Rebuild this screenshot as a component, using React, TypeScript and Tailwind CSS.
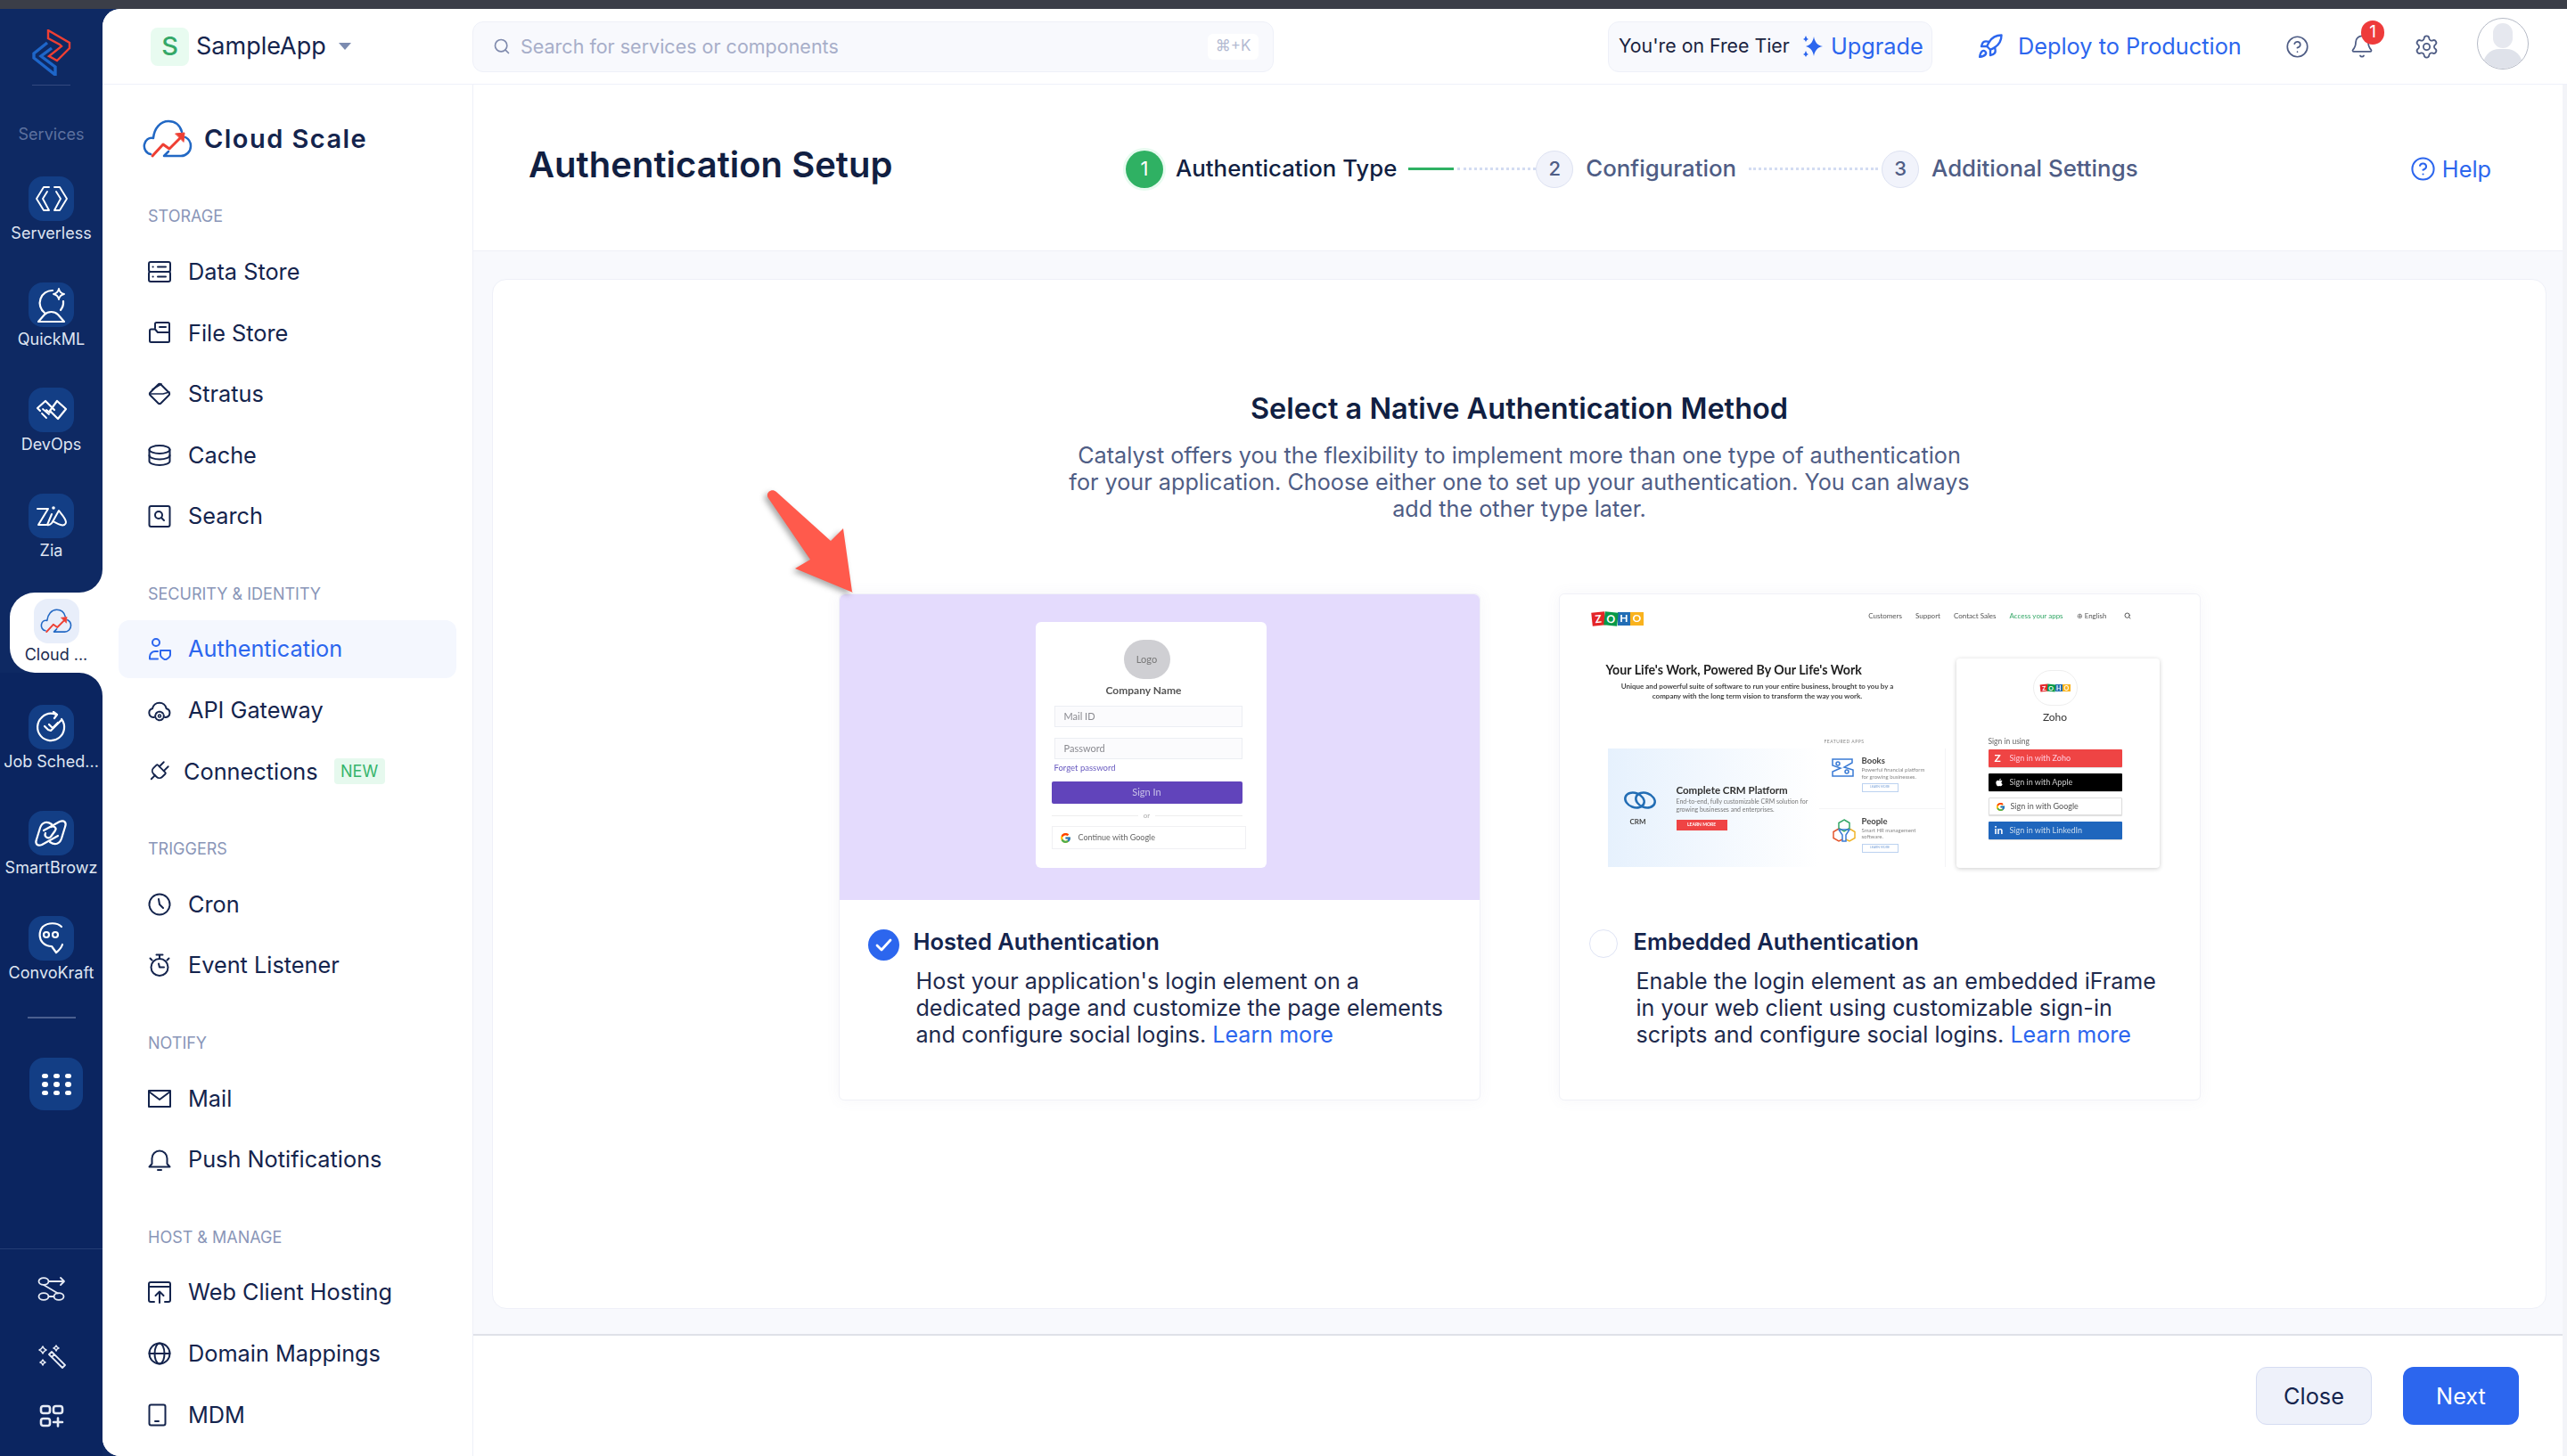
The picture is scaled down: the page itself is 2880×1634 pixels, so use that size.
import type { ReactNode } from "react";
import { Bell, CircleHelp, Plug, Rocket, Search, Settings } from "lucide-react";
import { FaApple } from "react-icons/fa";
import { FcGoogle } from "react-icons/fc";

function Line({ className, children, w = 26, h = 26, sw = 2 }: { className?: string; children: ReactNode; w?: number; h?: number; sw?: number }) {
  return (
    <svg width={w} height={h} viewBox={`0 0 ${w} ${h}`} fill="none" stroke="currentColor" strokeWidth={sw} strokeLinecap="round" strokeLinejoin="round" className={className}>
      {children}
    </svg>
  );
}

function CloudLogo({ w, h }: { w: number; h: number }) {
  return (
    <svg width={w} height={h} viewBox="0 0 56 44" fill="none" strokeLinecap="round" strokeLinejoin="round">
      <path d="M9 39C4 38 1 33 2 28c1-5 5-8 10-7C13 10 20 2 29 2c7 0 13 4 15 12" stroke="#2268c4" strokeWidth="2.5" />
      <path d="M48 20c4 2 6 6 6 10 0 6-5 11-11 11H24l5-5" stroke="#2268c4" strokeWidth="2.5" />
      <path d="M11 41l12-13 7 5 14-14" stroke="#ee3f33" strokeWidth="3" />
      <path d="M37 16l10-1-1 10z" fill="#ee3f33" stroke="#ee3f33" strokeWidth="1" />
    </svg>
  );
}

function AppLogo() {
  return (
    <svg width="44" height="52" viewBox="0 0 44 52" fill="none" strokeLinejoin="miter">
      <path d="M18 1l24 14v6L28 35l-9-5 14-11-2-2-13-7z" stroke="#ee3f33" strokeWidth="2.4" />
      <path d="M17 15L2 27v5l24 19V42L10 30l12-9" stroke="#1e66c9" strokeWidth="3.4" />
    </svg>
  );
}

const railIcons: Record<string, ReactNode> = {
  Serverless: (
    <Line w={38} h={30} sw={1.9} className="text-white">
      <path d="M16 2H10L2 15l8 13h6l-7-13 5-8" />
      <path d="M22 2h6l8 13-8 13h-6l7-13-5-8" />
    </Line>
  ),
  QuickML: (
    <Line w={34} h={42} sw={2.2} className="text-white">
      <path d="M18 5A14 14 0 0 0 9 30" />
      <path d="M30 17a14 14 0 0 1-3 10" />
      <path d="M2 40h29l-7-8c-4-4-11-4-15 0z" />
      <path d="M25 3q1 5 6 6-5 1-6 6-1-5-6-6 5-1 6-6z" strokeWidth="1.8" />
    </Line>
  ),
  DevOps: (
    <Line w={36} h={26} sw={2.2} className="text-white">
      <path d="M21 13L11 3 2 11l3 3" />
      <path d="M24 3l10 9-9 11-9-9z" />
      <path d="M8 12l7 6M7 17l5 5M12 13l4 3" strokeWidth="1.8" />
    </Line>
  ),
  Zia: (
    <Line w={36} h={28} sw={2} className="text-white">
      <path d="M2 6h12L3 24h10" />
      <path d="M18 12l-5 12" />
      <path d="M13 24c4 1 6-3 8-7l5-9c3 4 8 9 8 13 0 3-3 4-6 3-4-1-6-3-9-4" />
      <circle cx="20" cy="5" r="1.8" fill="white" stroke="none" />
    </Line>
  ),
  "Job Sched...": (
    <Line w={36} h={36} sw={2.2} className="text-white">
      <path d="M8 7a15 15 0 1 0 22 2" />
      <path d="M8 7a15 15 0 0 1 16-3" />
      <path d="M21 1l4 3-3 4" />
      <path d="M11 17l4 4M15 21l3 1 12-12" />
      <path d="M16 15l4 4 6-6" />
    </Line>
  ),
  SmartBrowz: (
    <Line w={38} h={34} sw={2.2} className="text-white">
      <path d="M20 7C14 3 9 5 7 11L3 24c-2 5 1 8 6 6l18-10" />
      <path d="M18 27c6 4 11 2 13-4l4-13c2-5-1-8-6-6L11 14" />
      <path d="M13 17c-2 4 3 7 6 4l5-7c2-3-2-6-5-4" />
    </Line>
  ),
  ConvoKraft: (
    <Line w={30} h={38} sw={2.2} className="text-white">
      <path d="M27 6C22 1 12 1 6 6c-5 6-4 14 0 18 3 3 7 4 10 4l5 7c4-3 6-6 7-9" />
      <circle cx="10" cy="15" r="3" />
      <circle cx="20" cy="15" r="3" />
    </Line>
  ),
};

function RailItem({ label }: { label: string }) {
  return (
    <div className="flex h-[76px] flex-col items-center">
      <div className="flex h-[50px] w-[51px] items-center justify-center rounded-[16px] bg-[#133e85]">{railIcons[label]}</div>
      <span className="mt-[2px] whitespace-nowrap text-[18px] leading-[24px] text-[#dfe5f2]">{label}</span>
    </div>
  );
}

function Rail() {
  return (
    <div className="flex w-[115px] shrink-0 flex-col bg-white">
      <div className="flex h-[655px] flex-col items-center rounded-br-[26px] bg-[#0e2963]">
        <div className="mt-[23px]">
          <AppLogo />
        </div>
        <div className="mt-[10px] h-px w-[43px] bg-[#33497f]" />
        <div className="mt-[44px] h-[22px] text-[18px] leading-[22px] text-[#5d719f]">Services</div>
        <div className="mt-[36px] flex flex-col gap-[42.7px]">
          <RailItem label="Serverless" />
          <RailItem label="QuickML" />
          <RailItem label="DevOps" />
          <RailItem label="Zia" />
        </div>
      </div>

      <div className="bg-[#0e2963] pl-[11px]">
        <div className="flex h-[90px] flex-col items-center rounded-l-[28px] bg-white pt-[7px]">
          <div className="flex h-[50px] w-[51px] items-center justify-center rounded-[16px] bg-[#e8eefa]">
            <CloudLogo w={36} h={28} />
          </div>
          <span className="mt-[1px] text-[18px] leading-[24px] text-[#1b2a4e]">Cloud ...</span>
        </div>
      </div>

      <div className="flex flex-1 flex-col rounded-tr-[26px] bg-[#0b2560]">
        <div className="flex flex-col items-center gap-[42.7px] pt-[36px]">
          <RailItem label="Job Sched..." />
          <RailItem label="SmartBrowz" />
          <RailItem label="ConvoKraft" />
        </div>
        <div className="mx-auto mt-[37px] h-[2px] w-[54px] bg-[#4a5f8f]" />
        <div className="ml-[33px] mt-[44px] flex h-[59px] w-[60px] items-center justify-center rounded-[16px] bg-[#133e85]">
          <div className="grid grid-cols-3 gap-x-[6px] gap-y-[4px]">
            {Array.from({ length: 9 }).map((_, i) => (
              <span key={i} className="h-[5.5px] w-[7px] rounded-full bg-white" />
            ))}
          </div>
        </div>
        <div className="mt-[155px] flex flex-1 flex-col items-center border-t border-[#243c74] pt-[30px] text-[#e6ebf5]">
          <Line w={32} h={30} sw={1.8}>
            <ellipse cx="7" cy="6" rx="5.5" ry="3.8" />
            <ellipse cx="7" cy="23" rx="5.5" ry="3.8" />
            <ellipse cx="24" cy="23" rx="5.5" ry="3.8" />
            <path d="M13 6h17M26 2l4 4-4 4M12.5 23h6M7 10l16 9.5" />
          </Line>
          <div className="mt-[47px]">
            <Line w={32} h={32} sw={1.8}>
              <path d="M13 11l3-3 15 15-3 3zM16 14l3-3" />
              <path d="M6 2q1 3 4 4-3 1-4 4-1-3-4-4 3-1 4-4zM21 1q.6 2 3 3-2.400.6-3 3-.6-2.400-3-3 2.400-1 3-3zM6 17q.6 2 3 3-2.400.6-3 3-.6-2.400-3-3 2.400-1 3-3z" strokeWidth="1.5" />
            </Line>
          </div>
          <div className="mt-[34px]">
            <Line w={28} h={28} sw={2.6}>
              <rect x="2" y="3" width="10" height="8" rx="2.500" />
              <rect x="16" y="3" width="10" height="8" rx="2.500" />
              <rect x="2" y="17" width="10" height="8" rx="2.500" />
              <path d="M16 21h10M21 16.500v9" />
            </Line>
          </div>
        </div>
      </div>
    </div>
  );
}

const navIcons: Record<string, ReactNode> = {
  "Data Store": (
    <>
      <rect x="1" y="2" width="24" height="11" rx="2" />
      <rect x="1" y="13" width="24" height="11" rx="2" />
      <path d="M5.500 7.500h.2M5.500 18.500h.2M11 7.500h9M11 18.500h9" />
    </>
  ),
  "File Store": (
    <>
      <path d="M8 8V3.500A1.500 1.500 0 0 1 9.500 2h13A1.500 1.500 0 0 1 24 3.500v19a1.500 1.500 0 0 1-1.500 1.500h-19A1.500 1.500 0 0 1 2 22.500V11a1.500 1.500 0 0 1 1.500-1.500H8l3 3.500h13" />
      <path d="M13 7h7" />
    </>
  ),
  Stratus: (
    <>
      <path d="M11.500 2.500a2 2 0 0 1 3 0l9 9a2 2 0 0 1 0 3l-9 9a2 2 0 0 1-3 0l-9-9a2 2 0 0 1 0-3z" />
      <path d="M3 13h14l7-2M5 8l10-6" strokeWidth="1.700" />
    </>
  ),
  Cache: (
    <>
      <ellipse cx="13" cy="6.500" rx="11.500" ry="4.500" />
      <path d="M1.500 6.500v13c0 2.500 5 4.500 11.500 4.500s11.500-2 11.500-4.500v-13" />
      <path d="M1.500 13c0 2.500 5 4.500 11.500 4.500s11.500-2 11.500-4.500" />
    </>
  ),
  Search: (
    <>
      <rect x="1.500" y="2" width="23" height="23" rx="2" />
      <circle cx="12" cy="12" r="4" />
      <path d="M15 15l3 3" />
    </>
  ),
  Authentication: (
    <>
      <circle cx="9" cy="6" r="4" />
      <path d="M2 24.500h9M2 24.500V22a6 6 0 0 1 6-6h3" />
      <path d="M14 15h11v5c0 2.500-2.500 4-5.500 5.500C16.500 24 14 22.500 14 20z" />
    </>
  ),
  "API Gateway": (
    <>
      <path d="M7 21H6a5 5 0 0 1-1-9.800 8 8 0 0 1 15.700 0A5 5 0 0 1 20 21h-1" />
      <circle cx="13" cy="19.500" r="1.500" strokeWidth="1.500" />
      <circle cx="13" cy="19.500" r="4.800" strokeWidth="2" strokeDasharray="2 1.500" />
    </>
  ),
  Cron: (
    <>
      <circle cx="13" cy="13" r="11.500" />
      <path d="M12 7l1 6 4 4" />
    </>
  ),
  "Event Listener": (
    <>
      <circle cx="13" cy="15.500" r="9.500" />
      <path d="M9.500 1.500h7M13 1.500v4M2.500 5.500l2 2M23.500 5.500l-2 2M12 11.500l1 4h5" />
    </>
  ),
  Mail: (
    <>
      <rect x="1" y="4" width="24" height="18" />
      <path d="M1 5l12 9 12-9" />
    </>
  ),
  "Push Notifications": (
    <>
      <path d="M1.500 21.500h23l-3-3.500v-6a8.500 8.500 0 0 0-17 0v6z" />
      <path d="M11 25h4" />
    </>
  ),
  "Web Client Hosting": (
    <>
      <path d="M7 24H3a2 2 0 0 1-2-2V4a2 2 0 0 1 2-2h20a2 2 0 0 1 2 2v18a2 2 0 0 1-2 2h-4M1 7h24" />
      <path d="M13 25V13M8.500 17l4.500-4.500 4.500 4.500" />
    </>
  ),
  "Domain Mappings": (
    <>
      <circle cx="13" cy="13" r="11.500" />
      <ellipse cx="13" cy="13" rx="5.500" ry="11.500" />
      <path d="M1.500 13h23" />
    </>
  ),
  MDM: (
    <>
      <rect x="1.500" y="1.500" width="18" height="23" rx="2" />
      <path d="M8 20h4" />
    </>
  ),
};

const navGroups = [
  { title: "STORAGE", items: ["Data Store", "File Store", "Stratus", "Cache", "Search"] },
  { title: "SECURITY & IDENTITY", items: ["Authentication", "API Gateway", "Connections"] },
  { title: "TRIGGERS", items: ["Cron", "Event Listener"] },
  { title: "NOTIFY", items: ["Mail", "Push Notifications"] },
  { title: "HOST & MANAGE", items: ["Web Client Hosting", "Domain Mappings", "MDM"] },
];

function NavRow({ label }: { label: string }) {
  const active = label === "Authentication";
  if (label === "Connections") {
    return (
      <div className="flex h-[68.6px] items-center pl-[49px] text-[#14244d]">
        <Plug size={28} strokeWidth={1.6} className="rotate-45" />
        <span className="ml-[14px] text-[25.3px]">{label}</span>
        <span className="ml-[18px] flex h-[29px] w-[57px] items-center justify-center rounded-[4px] bg-[#e6f9ee] text-[18px] text-[#35b46b]">NEW</span>
      </div>
    );
  }
  return (
    <div className="flex h-[68.6px] items-center px-[18px]">
      <div className={`flex h-[65px] w-full items-center rounded-[12px] pl-[33px] ${active ? "bg-[#f4f7fe] text-[#2c66ee]" : "text-[#14244d]"}`}>
        <Line>{navIcons[label]}</Line>
        <span className="ml-[19px] text-[25.3px]">{label}</span>
      </div>
    </div>
  );
}

function Sidebar() {
  return (
    <aside className="w-[416px] shrink-0 border-r border-[#eef0f8] bg-white">
      <div className="flex h-[122px] items-center pl-[45px]">
        <CloudLogo w={56} h={44} />
        <span className="ml-[13px] text-[29px] font-semibold tracking-[0.05em] text-[#14244d]">Cloud Scale</span>
      </div>
      <div className="flex flex-col gap-[42px] pt-[15px]">
        {navGroups.map((group) => (
          <section key={group.title}>
            <div className="mb-[18.600px] h-[20px] pl-[51px] text-[18px] leading-[22px] text-[#8a96b8]">{group.title}</div>
            {group.items.map((item) => (
              <NavRow key={item} label={item} />
            ))}
          </section>
        ))}
      </div>
    </aside>
  );
}

function Header() {
  return (
    <header className="flex h-[85px] shrink-0 items-center whitespace-nowrap border-b border-[#eff1fa] bg-white">
      <div className="ml-[54px] flex h-[43px] w-[43px] items-center justify-center rounded-[8px] bg-[#e8fbf0] text-[29px] font-medium text-[#35a868]">S</div>
      <span className="ml-[8px] w-[146px] text-[27px] text-[#14244d]">SampleApp</span>
      <span className="ml-[14px] h-0 w-0 border-x-[7.500px] border-t-[8px] border-x-transparent border-t-[#7b8bb0]" />
      <div className="ml-[136px] flex h-[57px] w-[899px] shrink-0 items-center rounded-[12px] border border-[#eef0f8] bg-[#f8f9fd] pl-[22px] pr-[16px]">
        <Search size={20} className="text-[#7f8aad]" />
        <span className="ml-[11px] text-[21.500px] text-[#a7aec9]">Search for services or components</span>
        <span className="ml-auto flex h-[29px] w-[57px] items-center justify-center rounded-[6px] bg-white text-[17px] text-[#b3bad2]">⌘+K</span>
      </div>
      <div className="ml-[375px] flex h-[57px] w-[364px] shrink-0 items-center rounded-[12px] border border-[#eef0f8] bg-[#f8f9fd] pl-[11px]">
        <span className="w-[192px] text-[21.300px] text-[#1a2340]">You're on Free Tier</span>
        <svg width="24" height="28" viewBox="0 0 24 28" fill="#2c66ee" className="ml-[14px] shrink-0">
          <path d="M13 3c1 6 4 10 10 11-6 1-9 5-10 11-1-6-4-10-9-11 5-1 8-5 9-11zM4 2q.7 3 3 4-2.300.7-3 3-.7-2.300-3-3 2.300-1 3-4zM4 19q.7 3 3 4-2.300.7-3 3-.7-2.300-3-3 2.300-1 3-4z" />
        </svg>
        <span className="ml-[8px] text-[25.300px] text-[#2c66ee]">Upgrade</span>
      </div>
      <Rocket size={30} strokeWidth={1.9} className="ml-[50px] shrink-0 text-[#2c66ee]" />
      <span className="ml-[16px] w-[250px] text-[25.300px] text-[#2c66ee]">Deploy to Production</span>
      <CircleHelp size={27} strokeWidth={1.5} className="ml-[50px] shrink-0 text-[#4f5d85]" />
      <div className="relative ml-[45px] shrink-0">
        <Bell size={28} strokeWidth={1.5} className="text-[#4f5d85]" />
        <span className="absolute -right-[11px] -top-[15px] flex h-[27px] w-[26px] items-center justify-center rounded-full bg-[#ee3b3b] text-[19px] text-white">1</span>
      </div>
      <Settings size={29} strokeWidth={1.5} className="ml-[44px] shrink-0 text-[#4f5d85]" />
      <div className="relative ml-[42px] -mt-[6px] h-[58px] w-[58px] shrink-0 overflow-hidden rounded-full border border-[#b5bac6] bg-white">
        <div className="absolute left-[17px] top-[5px] h-[28px] w-[22px] rounded-full bg-[#e6e8ef]" />
        <div className="absolute left-[6px] top-[34px] h-[28px] w-[44px] rounded-t-[18px] bg-[#dfe2ea]" />
      </div>
    </header>
  );
}

function Step({ n, label, active }: { n: number; label: string; active?: boolean }) {
  return (
    <div className="flex items-center">
      <span
        className={`flex h-[42px] w-[42px] items-center justify-center rounded-full text-[22px] ${
          active ? "bg-[#2fb163] text-white ring-[3px] ring-[#e8fbf0]" : "border border-[#dde2f2] bg-[#f1f3fb] font-medium text-[#4f5d85]"
        }`}
      >
        {n}
      </span>
      <span className={`ml-[14px] text-[25.800px] font-medium ${active ? "text-[#111f42]" : "text-[#4f5d85]"}`}>{label}</span>
    </div>
  );
}

function ZohoLogo({ large }: { large?: boolean }) {
  const box = large ? "h-[15px] w-[14.500px] text-[12px]" : "h-[8px] w-[8.500px] text-[7px]";
  return (
    <div className="flex items-center">
      <span className={`flex -rotate-6 items-center justify-center bg-[#e42527] font-bold text-white ${box}`}>Z</span>
      <span className={`flex rotate-6 items-center justify-center bg-[#089949] font-bold text-white ${box}`}>O</span>
      <span className={`flex items-center justify-center bg-[#226db4] font-bold text-white ${box}`}>H</span>
      <span className={`flex items-center justify-center bg-[#f9b21d] font-bold text-white ${box}`}>O</span>
    </div>
  );
}

function HostedPreview() {
  return (
    <div className="h-[343px] rounded-t-[6px] bg-[#e4dbfd] pl-[220px] pt-[31px] font-['Lato',sans-serif]">
      <div className="flex h-[276px] w-[259px] flex-col rounded-[6px] bg-white pl-[18px] pt-[20px] blur-[0.4px]">
        <div className="ml-[81px] flex h-[44px] w-[52px] items-center justify-center rounded-full bg-[#cfcfd3] text-[11px] text-[#777]">Logo</div>
        <div className="mt-[5px] pl-[61px] text-[12px] font-bold leading-[16px] text-[#555]">Company Name</div>
        <div className="ml-[3px] mt-[9px] flex h-[24px] w-[211px] items-center border border-[#eceef3] bg-[#fbfbfd] pl-[10px] text-[11px] text-[#8a8a90]">Mail ID</div>
        <div className="ml-[3px] mt-[12px] flex h-[24px] w-[211px] items-center border border-[#eceef3] bg-[#fbfbfd] pl-[10px] text-[11px] text-[#8a8a90]">Password</div>
        <div className="ml-[3px] mt-[3px] text-[9.500px] leading-[14px] text-[#6a5cc0]">Forget password</div>
        <div className="mt-[8px] flex h-[25px] w-[214px] items-center justify-center rounded-[2px] bg-[#6144bb] text-[11px] text-[#c9c2e8]">Sign In</div>
        <div className="mt-[7px] flex h-[12px] w-[214px] items-center gap-[6px] text-[8px] text-[#aaa]">
          <span className="h-px flex-1 bg-[#eee]" />
          or
          <span className="h-px flex-1 bg-[#eee]" />
        </div>
        <div className="mt-[6px] flex h-[26px] w-[218px] items-center border border-[#f0f0f3] pl-[8px] text-[9px] text-[#666]">
          <FcGoogle size={13} />
          <span className="ml-[8px]">Continue with Google</span>
        </div>
      </div>
    </div>
  );
}

function SmallApp({ title, lines, icon }: { title: string; lines: string[]; icon: ReactNode }) {
  return (
    <div className="flex h-[66.500px] items-start pl-[14px] pt-[8px]">
      <div className="mt-[3px] w-[34px] shrink-0">{icon}</div>
      <div>
        <div className="text-[9.500px] font-bold leading-[11px] text-[#444]">{title}</div>
        <div className="mt-[1px] text-[6px] leading-[7.500px] text-[#888]">
          {lines.map((l) => (
            <div key={l}>{l}</div>
          ))}
        </div>
        <div className="mt-[4px] flex h-[10px] w-[41px] items-center justify-center border border-[#bcd2f0] text-[3.500px] text-[#7aa2d8]">LEARN MORE</div>
      </div>
    </div>
  );
}

function SignInButton({ bg, icon, label }: { bg: string; icon: ReactNode; label: string }) {
  return (
    <div className={`flex h-[20px] w-[150px] items-center rounded-[1px] pl-[7px] text-[9px] shadow-[0_1px_1px_#0002] ${bg}`}>
      <span className="flex w-[16px] justify-start">{icon}</span>
      <span className="ml-[1px]">{label}</span>
    </div>
  );
}

function EmbeddedPreview() {
  return (
    <div className="h-[343px] rounded-t-[6px] bg-white pt-[19px] font-['Lato',sans-serif]">
      <div className="blur-[0.4px]">
        <div className="flex h-[16px] items-center pl-[36px] pr-[77px]">
          <ZohoLogo large />
          <div className="ml-auto -mt-[6px] flex items-center gap-[15px] text-[8px] text-[#555]">
            <span>Customers</span>
            <span>Support</span>
            <span>Contact Sales</span>
            <span className="text-[#35a868]">Access your apps</span>
            <span>⊕ English</span>
            <Search size={8} strokeWidth={3} className="ml-[4px]" />
          </div>
        </div>
        <div className="mt-[37px] flex pl-[52px]">
          <div className="w-[393px]">
            <div className="mt-[5px] h-[16px] whitespace-nowrap text-[14.200px] font-bold leading-[16px] text-[#222]">Your Life's Work, Powered By Our Life's Work</div>
            <div className="mt-[5px] w-[340px] text-center text-[8px] font-bold leading-[11px] text-[#444]">
              Unique and powerful suite of software to run your entire business, brought to you by a
              <br />
              company with the long term vision to transform the way you work.
            </div>
            <div className="mt-[41px] h-[8px] pl-[245px] text-[5px] leading-[8px] tracking-[0.1em] text-[#888]">FEATURED APPS</div>
            <div className="ml-[2px] mt-[4px] flex h-[133px]">
              <div className="flex w-[237px] bg-gradient-to-r from-[#e6f1fd] to-white pl-[17px]">
                <div className="flex w-[60px] flex-col pt-[47px]">
                  <svg width="38" height="22" viewBox="0 0 38 22" fill="none" stroke="#226db4" strokeWidth="2.500">
                    <ellipse cx="13" cy="11" rx="11" ry="8" transform="rotate(20 13 11)" />
                    <ellipse cx="25" cy="11" rx="11" ry="8" transform="rotate(20 25 11)" />
                  </svg>
                  <span className="mt-[7px] pl-[8px] text-[8px] font-bold text-[#444]">CRM</span>
                </div>
                <div className="pt-[40px]">
                  <div className="whitespace-nowrap text-[11.500px] font-bold leading-[14px] text-[#333]">Complete CRM Platform</div>
                  <div className="mt-[1px] whitespace-nowrap text-[7px] leading-[9px] text-[#777]">
                    End-to-end, fully customizable CRM solution for
                    <br />
                    growing businesses and enterprises.
                  </div>
                  <div className="mt-[7px] flex h-[12px] w-[57px] items-center justify-center bg-[#ef4444] text-[5px] font-bold text-white">LEARN MORE</div>
                </div>
              </div>
              <div className="w-[142px] border-r border-[#f4f4f6]">
                <div className="border-b border-[#f4f4f6]">
                  <SmallApp
                    title="Books"
                    lines={["Powerful financial platform", "for growing businesses."]}
                    icon={
                      <svg width="25" height="22" viewBox="0 0 25 22" fill="none" stroke="#3a7bd5" strokeWidth="1.500">
                        <path d="M1 1h22v4L14 10l10 3v7H1v-5l9-4-9-3z" />
                        <circle cx="7" cy="6" r="2" />
                        <circle cx="17" cy="15" r="2" />
                      </svg>
                    }
                  />
                </div>
                <SmallApp
                  title="People"
                  lines={["Smart HR management", "software."]}
                  icon={
                    <svg width="28" height="28" viewBox="0 0 28 28" fill="none" strokeWidth="1.500">
                      <path d="M14 1l6 3.500v6L14 14l-6-3.500v-6z" stroke="#35a868" />
                      <path d="M8 11l-6 3.500v7L8 25l4-2" stroke="#e4572e" />
                      <path d="M20 11l6 3.500v7L20 25l-4-2" stroke="#f0b429" />
                      <path d="M8 12h12l-4 6v7h-4v-7z" stroke="#3a7bd5" />
                    </svg>
                  }
                />
              </div>
            </div>
          </div>
          <div className="flex h-[235px] w-[228px] flex-col rounded-[4px] bg-white pl-[36px] pt-[13px] shadow-[0_1px_5px_#0003]">
            <div className="ml-[50px] flex h-[40px] w-[50px] items-center justify-center rounded-full border border-[#eee]">
              <ZohoLogo />
            </div>
            <div className="mt-[5px] w-[150px] text-center text-[12px] leading-[16px] text-[#333]">Zoho</div>
            <div className="mt-[13px] text-[8.500px] leading-[12px] text-[#666]">Sign in using</div>
            <div className="mt-[3px] flex flex-col gap-[7px]">
              <SignInButton bg="bg-[#ef4444] text-[#fcd]" icon={<b className="text-[12px] leading-none text-white">Z</b>} label="Sign in with Zoho" />
              <SignInButton bg="bg-black text-[#ccc]" icon={<FaApple size={10} className="text-white" />} label="Sign in with Apple" />
              <SignInButton bg="border border-[#ddd] bg-white text-[#555]" icon={<FcGoogle size={11} />} label="Sign in with Google" />
              <SignInButton bg="bg-[#1f66bd] text-[#cde]" icon={<b className="text-[12px] leading-none text-white">in</b>} label="Sign in with LinkedIn" />
            </div>
          </div>
        </div>
      </div>
    </div>
  );
}

function OptionCard({ selected, title, children, preview }: { selected?: boolean; title: string; children: ReactNode; preview: ReactNode }) {
  return (
    <div className="h-[569px] w-[720px] rounded-[6px] border border-[#f0f1f7] bg-white shadow-[0_0_16px_#6b76a010]">
      {preview}
      <div className="flex pl-[32px] pt-[32px]">
        <div className="w-[51px] shrink-0 pt-[1px]">
          {selected ? (
            <span className="flex h-[35px] w-[35px] items-center justify-center rounded-full bg-[#2c66ee]">
              <svg width="19" height="15" viewBox="0 0 19 15" fill="none" stroke="white" strokeWidth="2.800" strokeLinecap="round" strokeLinejoin="round">
                <path d="M2 8l5 5L17 2" />
              </svg>
            </span>
          ) : (
            <span className="ml-[1px] block h-[32px] w-[32px] rounded-full border border-[#dfe4f5]" />
          )}
        </div>
        <div>
          <div className="text-[25.500px] font-semibold leading-[30px] text-[#14244d]">{title}</div>
          <p className="ml-[3px] mt-[14px] text-[25.100px] leading-[30px] text-[#1e2a4d]">{children}</p>
        </div>
      </div>
    </div>
  );
}

export default function App() {
  return (
    <div className="flex h-[1634px] w-[2880px] flex-col overflow-hidden bg-[#0e2963] font-['Inter',sans-serif]">
      <div className="h-[10px] shrink-0 bg-[#3b3e48]" />
      <div className="flex min-h-0 flex-1">
        <Rail />
        <div className="flex min-w-0 flex-1 flex-col overflow-hidden rounded-l-[20px] bg-white">
          <Header />
          <div className="flex min-h-0 flex-1">
            <Sidebar />
            <main className="flex min-w-0 flex-1 flex-col border-r-[5px] border-[#f3f4f8]">
              <div className="flex h-[187px] shrink-0 items-center whitespace-nowrap border-b border-[#eef0f8] bg-white pl-[62px] pt-[3px]">
                <h1 className="-mt-[9px] w-[670px] text-[40px] font-semibold text-[#111f42]">Authentication Setup</h1>
                <div className="flex items-center">
                  <Step n={1} label="Authentication Type" active />
                  <div className="ml-[13px] flex w-[143px] items-center">
                    <span className="h-[3px] w-[51px] bg-[#2fb163]" />
                    <span className="ml-[4px] flex-1 border-t-[3px] border-dotted border-[#d3dcf2]" />
                  </div>
                  <Step n={2} label="Configuration" />
                  <span className="ml-[14px] w-[145px] border-t-[3px] border-dotted border-[#d3dcf2]" />
                  <div className="ml-[4px]">
                    <Step n={3} label="Additional Settings" />
                  </div>
                </div>
                <div className="ml-auto mr-[80px] flex items-center text-[25.300px] text-[#2c66ee]">
                  <CircleHelp size={29} strokeWidth={1.7} />
                  <span className="ml-[7px]">Help</span>
                </div>
              </div>

              <div className="min-h-0 flex-1 bg-[#f8f9fd] pb-[28px] pl-[21px] pr-[18px] pt-[31px]">
                <div className="flex h-full flex-col items-center rounded-[16px] border border-[#eef0f8] bg-white pt-[125px]">
                  <h2 className="text-[32.500px] font-semibold leading-[40px] text-[#111f42]">Select a Native Authentication Method</h2>
                  <p className="mt-[17px] text-center text-[25.200px] leading-[30px] text-[#4f5d85]">
                    Catalyst offers you the flexibility to implement more than one type of authentication
                    <br />
                    for your application. Choose either one to set up your authentication. You can always
                    <br />
                    add the other type later.
                  </p>
                  <div className="relative mt-[80px] flex gap-[88px]">
                    <svg width="110" height="125" viewBox="0 0 110 125" className="absolute -left-[84px] -top-[122px] drop-shadow-[-3px_3px_3px_#0005]">
                      <path d="M14 8c-5-5-13 1-9 7l47 69-17 10 65 27-1-1-10-71-14 14z" fill="#ff5a4c" />
                    </svg>
                    <OptionCard selected title="Hosted Authentication" preview={<HostedPreview />}>
                      Host your application's login element on a
                      <br />
                      dedicated page and customize the page elements
                      <br />
                      and configure social logins. <span className="text-[#2c66ee]">Learn more</span>
                    </OptionCard>
                    <OptionCard title="Embedded Authentication" preview={<EmbeddedPreview />}>
                      Enable the login element as an embedded iFrame
                      <br />
                      in your web client using customizable sign-in
                      <br />
                      scripts and configure social logins. <span className="text-[#2c66ee]">Learn more</span>
                    </OptionCard>
                  </div>
                </div>
              </div>

              <div className="flex h-[137px] shrink-0 items-start justify-end gap-[35px] border-t-[2px] border-[#dfe1e8] bg-white pr-[49px] pt-[35px]">
                <button className="h-[65px] w-[130px] rounded-[12px] border border-[#d5dcf2] bg-[#eef1fa] text-[25.300px] text-[#14244d]">Close</button>
                <button className="h-[65px] w-[130px] rounded-[12px] bg-[#2c66ee] text-[25.300px] text-white">Next</button>
              </div>
            </main>
          </div>
        </div>
      </div>
    </div>
  );
}
